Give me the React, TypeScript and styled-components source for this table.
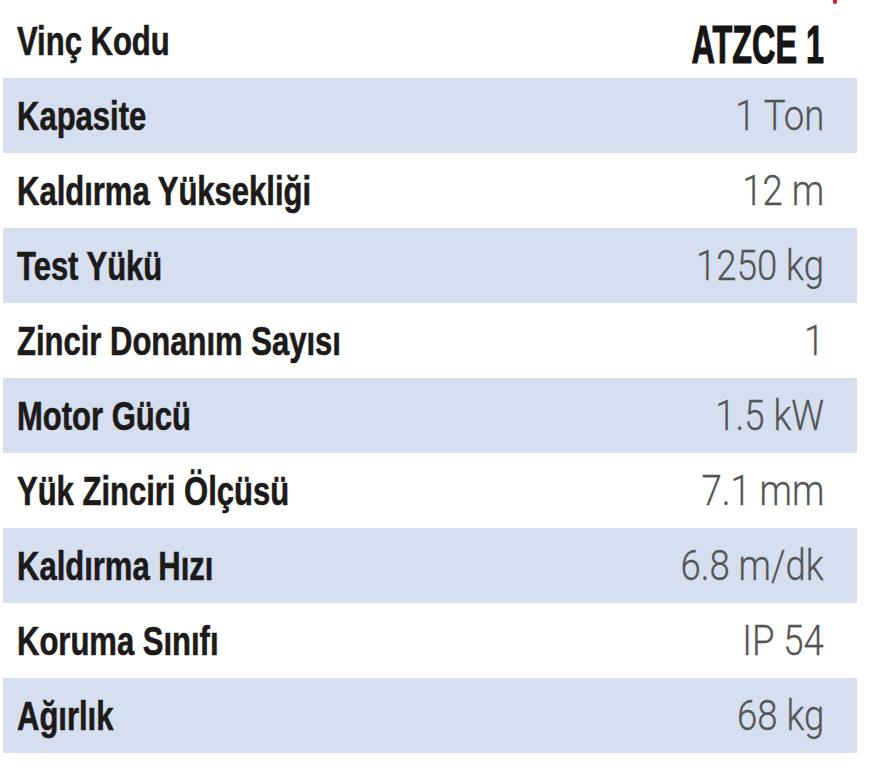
import React from 'react';
import styled, { createGlobalStyle } from 'styled-components';

const GlobalStyle = createGlobalStyle`
  html, body {
    margin: 0;
    padding: 0;
    background: #ffffff;
  }
`;

const Page = styled.div`
  position: relative;
  width: 869px;
  height: 768px;
  background: #ffffff;
  padding-left: 3px;
  box-sizing: border-box;
`;

const RedMark = styled.span`
  position: absolute;
  top: 0;
  left: 833px;
  width: 4px;
  height: 4px;
  border-radius: 0 0 2px 2px;
  background: #e5132b;
`;

const Table = styled.div`
  width: 854px;
  display: flex;
  flex-direction: column;
`;

const Row = styled.div<{ $shaded?: boolean; $head?: boolean }>`
  display: flex;
  align-items: center;
  justify-content: space-between;
  height: ${(p) => (p.$head ? '78px' : '75px')};
  padding: 0 33px 0 14px;
  box-sizing: border-box;
  background: ${(p) => (p.$shaded ? '#d6dff0' : 'transparent')};
`;

// condensed face drawn by squeezing Liberation Sans sideways
const Label = styled.span<{ $head?: boolean }>`
  display: inline-block;
  white-space: nowrap;
  font-family: 'Liberation Sans', Arial, sans-serif;
  font-weight: 700;
  font-size: 40px;
  line-height: 1;
  color: #1d1a1a;
  -webkit-text-stroke: 0.6px #1d1a1a;
  margin-top: ${(p) => (p.$head ? '4px' : '0')};
  transform: scaleX(0.775);
  transform-origin: left center;
`;

const Value = styled.span`
  display: inline-block;
  white-space: nowrap;
  font-family: Roboto, 'Liberation Sans', sans-serif;
  font-weight: 300;
  font-size: 42px;
  line-height: 1;
  color: #555555;
  -webkit-text-stroke: 0.3px #555555;
  transform: scaleX(0.87);
  transform-origin: right center;
`;

const Code = styled.span`
  display: inline-block;
  white-space: nowrap;
  font-family: 'Liberation Sans', Arial, sans-serif;
  font-weight: 700;
  font-size: 53px;
  line-height: 1;
  color: #161414;
  margin-top: 10px;
  -webkit-text-stroke: 1.2px #161414;
  transform: scaleX(0.61);
  transform-origin: right center;
`;

const specs = [
  { label: 'Kapasite', value: '1 Ton' },
  { label: 'Kaldırma Yüksekliği', value: '12 m' },
  { label: 'Test Yükü', value: '1250 kg' },
  { label: 'Zincir Donanım Sayısı', value: '1' },
  { label: 'Motor Gücü', value: '1.5 kW' },
  { label: 'Yük Zinciri Ölçüsü', value: '7.1 mm' },
  { label: 'Kaldırma Hızı', value: '6.8 m/dk' },
  { label: 'Koruma Sınıfı', value: 'IP 54' },
  { label: 'Ağırlık', value: '68 kg' },
];

export default function App() {
  return (
    <Page>
      <GlobalStyle />
      <RedMark />
      <Table>
        <Row $head>
          <Label $head>Vinç Kodu</Label>
          <Code>ATZCE 1</Code>
        </Row>
        {specs.map((s, i) => (
          <Row key={s.label} $shaded={i % 2 === 0}>
            <Label>{s.label}</Label>
            <Value>{s.value}</Value>
          </Row>
        ))}
      </Table>
    </Page>
  );
}
